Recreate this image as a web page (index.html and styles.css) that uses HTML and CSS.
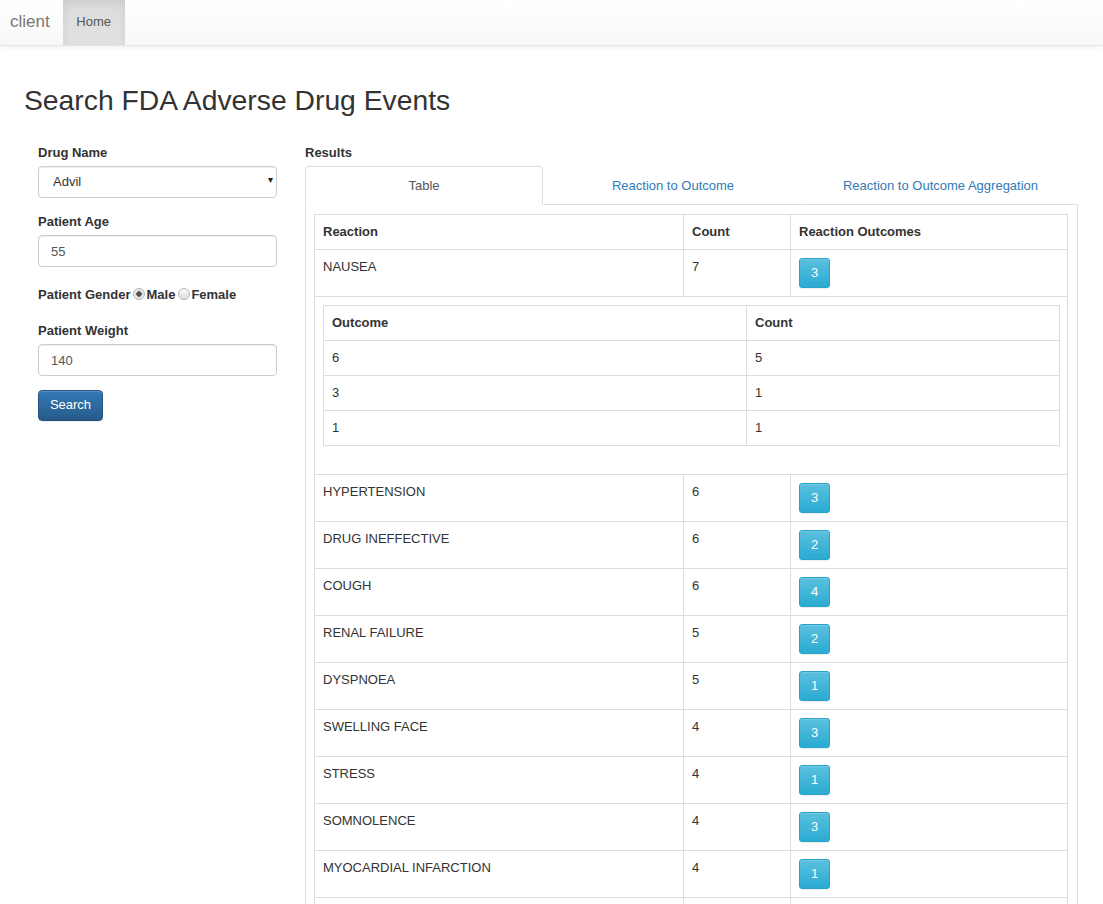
FILE: index.html
```html
<!DOCTYPE html>
<html>
<head>
<meta charset="utf-8">
<title>client</title>
<link rel="stylesheet" href="styles.css">
</head>
<body>
<nav class="navbar">
  <a class="brand">client</a>
  <a class="nav-item active">Home</a>
</nav>
<main class="page">
  <h1 class="title">Search FDA Adverse Drug Events</h1>
  <div class="layout">
    <form class="search-form">
      <div class="form-group">
        <label class="label">Drug Name</label>
        <div class="select-wrap">
          <select class="control select"><option>Advil</option></select>
          <span class="select-arrow">▾</span>
        </div>
      </div>
      <div class="form-group">
        <label class="label">Patient Age</label>
        <input class="control" type="text" value="55">
      </div>
      <div class="form-group gender"><span class="label inline">Patient Gender</span><input class="radio" type="radio" name="g" checked><span class="label inline">Male</span><input class="radio" type="radio" name="g"><span class="label inline">Female</span></div>
      <div class="form-group">
        <label class="label">Patient Weight</label>
        <input class="control" type="text" value="140">
      </div>
      <button class="btn-primary" type="button">Search</button>
    </form>
    <section class="results">
      <div class="label">Results</div>
      <ul class="tabs">
        <li class="tab active t1">Table</li>
        <li class="tab t2">Reaction to Outcome</li>
        <li class="tab t3">Reaction to Outcome Aggregation</li>
      </ul>
      <div class="tab-content">
        <table class="table main">
          <colgroup><col class="c1"><col class="c2"><col class="c3"></colgroup>
          <thead><tr><th>Reaction</th><th>Count</th><th>Reaction Outcomes</th></tr></thead>
          <tbody>
            <tr><td>NAUSEA</td><td>7</td><td><button class="btn-info" type="button">3</button></td></tr>
            <tr class="nested-row"><td colspan="3">
              <table class="table nested">
                <colgroup><col class="n1"><col class="n2"></colgroup>
                <thead><tr><th>Outcome</th><th>Count</th></tr></thead>
                <tbody>
                  <tr><td>6</td><td>5</td></tr>
                  <tr><td>3</td><td>1</td></tr>
                  <tr><td>1</td><td>1</td></tr>
                </tbody>
              </table>
            </td></tr>
            <tr><td>HYPERTENSION</td><td>6</td><td><button class="btn-info" type="button">3</button></td></tr>
            <tr><td>DRUG INEFFECTIVE</td><td>6</td><td><button class="btn-info" type="button">2</button></td></tr>
            <tr><td>COUGH</td><td>6</td><td><button class="btn-info" type="button">4</button></td></tr>
            <tr><td>RENAL FAILURE</td><td>5</td><td><button class="btn-info" type="button">2</button></td></tr>
            <tr><td>DYSPNOEA</td><td>5</td><td><button class="btn-info" type="button">1</button></td></tr>
            <tr><td>SWELLING FACE</td><td>4</td><td><button class="btn-info" type="button">3</button></td></tr>
            <tr><td>STRESS</td><td>4</td><td><button class="btn-info" type="button">1</button></td></tr>
            <tr><td>SOMNOLENCE</td><td>4</td><td><button class="btn-info" type="button">3</button></td></tr>
            <tr><td>MYOCARDIAL INFARCTION</td><td>4</td><td><button class="btn-info" type="button">1</button></td></tr>
            <tr><td>HEADACHE</td><td>4</td><td><button class="btn-info" type="button">2</button></td></tr>
          </tbody>
        </table>
      </div>
    </section>
  </div>
</main>
</body>
</html>
```
FILE: styles.css
```css
* { box-sizing: border-box; }
html, body { margin: 0; padding: 0; }
body {
  font-family: "Liberation Sans", Arial, sans-serif;
  font-size: 13px;
  line-height: 1.42857;
  color: #333;
  background: #fff;
  overflow: hidden;
}
.navbar {
  display: flex;
  height: 46px;
  background: linear-gradient(to bottom, #fff 0, #f8f8f8 100%);
  border-bottom: 1px solid #e7e7e7;
  box-shadow: 0 1px 5px rgba(0,0,0,.075);
}
.brand {
  display: flex;
  align-items: center;
  padding: 0 13px 0 10px;
  font-size: 17px;
  color: #777;
}
.nav-item {
  display: flex;
  align-items: center;
  justify-content: center;
  width: 62px;
  color: #555;
  font-size: 13px;
}
.nav-item.active {
  background: linear-gradient(to bottom, #dbdbdb 0, #e2e2e2 100%);
  box-shadow: inset 0 3px 9px rgba(0,0,0,.075);
}
.page { padding: 0 0 0 24px; }
.title {
  margin: 39px 0 27px;
  font-size: 28.3px;
  font-weight: 400;
  line-height: 1.1;
  color: #333;
}
.layout { display: flex; gap: 28px; }
.search-form { width: 239px; margin-left: 14px; flex: none; }
.form-group { margin-bottom: 14px; }
.label {
  display: block;
  font-weight: bold;
  line-height: 19px;
  margin-bottom: 4px;
}
.label.inline { display: inline; margin: 0; }
.gender { padding: 4px 0 4px; margin-bottom: 13px; line-height: 19px; }
.control {
  display: block;
  width: 100%;
  height: 32px;
  padding: 6px 12px;
  font: inherit;
  color: #555;
  background: #fff;
  border: 1px solid #ccc;
  border-radius: 4px;
  box-shadow: inset 0 1px 1px rgba(0,0,0,.075);
}
.select-wrap { position: relative; }
.select {
  appearance: none;
  -webkit-appearance: none;
  padding-left: 14px;
  color: #333;
}
.select-arrow {
  position: absolute;
  right: 4px;
  top: 7px;
  font-size: 10px;
  color: #222;
  pointer-events: none;
}
.radio {
  appearance: none;
  -webkit-appearance: none;
  width: 12px;
  height: 12px;
  margin: 0 1px 0 3px;
  vertical-align: -1px;
  border: 1px solid #b5b5b5;
  border-radius: 50%;
  background: linear-gradient(to bottom, #fcfcfc, #dcdcdc);
}
.radio:checked {
  background: radial-gradient(circle, #555 0, #555 2.5px, #e8e8e8 3px);
}
.btn-primary {
  display: block;
  width: 65px;
  height: 31px;
  margin-top: 0;
  padding: 0;
  font: inherit;
  color: #fff;
  background: linear-gradient(to bottom, #337ab7 0, #265a88 100%);
  border: 1px solid #245580;
  border-radius: 4px;
  box-shadow: inset 0 1px 0 rgba(255,255,255,.15), 0 1px 1px rgba(0,0,0,.075);
}
.results { width: 773px; flex: none; }
.results > .label { margin-bottom: 4px; }
.tabs {
  display: flex;
  list-style: none;
  margin: 0;
  padding: 0;
}
.tab {
  height: 39px;
  line-height: 37px;
  text-align: center;
  color: #337ab7;
  border: 1px solid transparent;
  border-bottom-color: #ddd;
}
.tab.active {
  color: #555;
  background: #fff;
  border-color: #ddd #ddd transparent;
  border-radius: 4px 4px 0 0;
}
.t1 { width: 238px; }
.t2 { width: 260px; }
.t3 { width: 275px; }
.tab-content {
  border: 1px solid #ddd;
  border-top: 0;
  padding: 9px 9px 20px 8px;
}
.table {
  width: 100%;
  border-collapse: collapse;
  border: 1px solid #ddd;
  table-layout: fixed;
}
.table th, .table td {
  padding: 8px;
  border: 1px solid #ddd;
  text-align: left;
  vertical-align: top;
  line-height: 18px;
}
.main .c1 { width: 369px; }
.main .c2 { width: 107px; }
.main .c3 { width: 277px; }
.nested { margin-bottom: 20px; }
.nested .n1 { width: 423px; }
.nested .n2 { width: 313px; }
.nested-row > td { padding: 8px; }
.btn-info {
  display: block;
  width: 31px;
  height: 30px;
  padding: 0;
  font: inherit;
  color: #fff;
  background: linear-gradient(to bottom, #5bc0de 0, #2aabd2 100%);
  border: 1px solid #28a4c9;
  border-radius: 3px;
  box-shadow: inset 0 1px 0 rgba(255,255,255,.15), 0 1px 1px rgba(0,0,0,.075);
}
```
